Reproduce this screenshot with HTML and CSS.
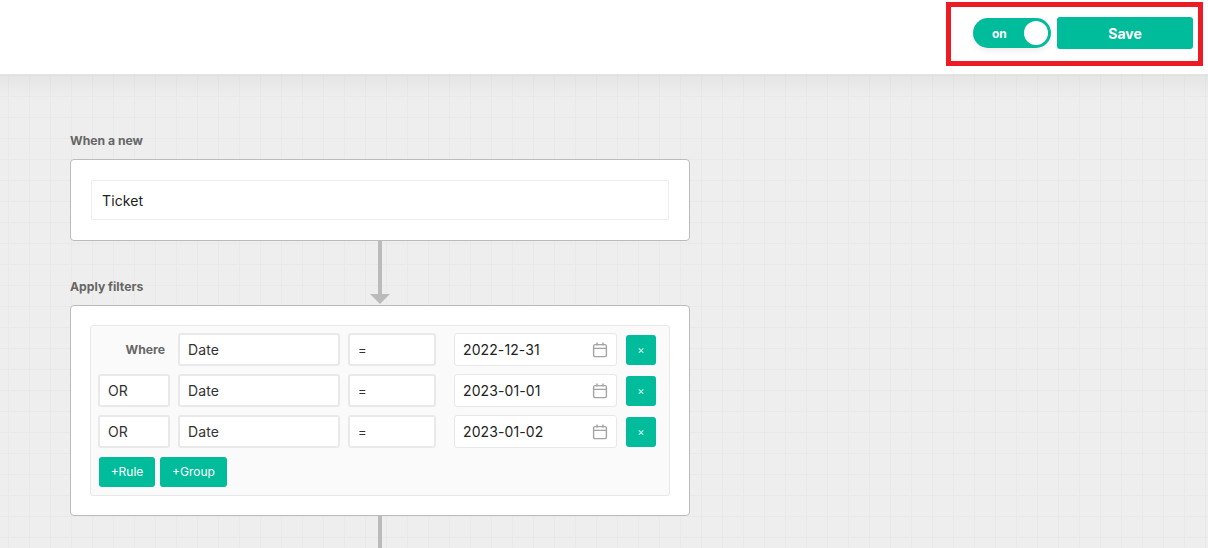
FILE: index.html
```html
<!DOCTYPE html>
<html lang="en">
<head>
<meta charset="utf-8">
<title>Workflow</title>
<link rel="stylesheet" href="styles.css">
</head>
<body>
<header class="topbar">
  <div class="actions">
    <div class="toggle"><span class="toggle-label">on</span><span class="knob"></span></div>
    <button class="save">Save</button>
  </div>
</header>
<main class="canvas">
  <div class="flow">
    <div class="label">When a new</div>
    <section class="card card-first">
      <div class="input-wide">Ticket</div>
    </section>
    <div class="connector connector-mid">
      <div class="line"></div>
      <div class="label label-filters">Apply filters</div>
      <div class="arrow"></div>
    </div>
    <section class="card card-filters">
      <div class="group">
        <div class="row">
          <div class="where">Where</div>
          <div class="field f-name">Date</div>
          <div class="field f-op">=</div>
          <div class="date"><span>2022-12-31</span>
            <svg class="cal" width="16" height="16" viewBox="0 0 16 16" fill="none" stroke="#a3a3a3" stroke-width="1.4"><rect x="1.6" y="2.6" width="12.8" height="12" rx="1.6"/><path d="M1.6 6.4h12.8M5 .6v3M11 .6v3"/></svg>
          </div>
          <button class="remove">×</button>
        </div>
        <div class="row">
          <div class="field f-logic">OR</div>
          <div class="field f-name">Date</div>
          <div class="field f-op">=</div>
          <div class="date"><span>2023-01-01</span>
            <svg class="cal" width="16" height="16" viewBox="0 0 16 16" fill="none" stroke="#a3a3a3" stroke-width="1.4"><rect x="1.6" y="2.6" width="12.8" height="12" rx="1.6"/><path d="M1.6 6.4h12.8M5 .6v3M11 .6v3"/></svg>
          </div>
          <button class="remove">×</button>
        </div>
        <div class="row">
          <div class="field f-logic">OR</div>
          <div class="field f-name">Date</div>
          <div class="field f-op">=</div>
          <div class="date"><span>2023-01-02</span>
            <svg class="cal" width="16" height="16" viewBox="0 0 16 16" fill="none" stroke="#a3a3a3" stroke-width="1.4"><rect x="1.6" y="2.6" width="12.8" height="12" rx="1.6"/><path d="M1.6 6.4h12.8M5 .6v3M11 .6v3"/></svg>
          </div>
          <button class="remove">×</button>
        </div>
        <div class="group-actions">
          <button class="add add-rule">+Rule</button>
          <button class="add add-group">+Group</button>
        </div>
      </div>
    </section>
    <div class="connector-end"></div>
  </div>
</main>
</body>
</html>
```
FILE: styles.css
```css
* { box-sizing: border-box; }
html, body { margin: 0; padding: 0; height: 100%; overflow: hidden; }
body { font-family: Inter, "Liberation Sans", sans-serif; color: #333; background: #eee; }
button { font-family: inherit; border: 0; cursor: pointer; padding: 0; }

.topbar { height: 74px; background: #fff; display: flex; justify-content: flex-end; align-items: flex-start; padding: 2px 5px 0 0; }
.actions { width: 257px; height: 64px; border: 5px solid #ed1c24; display: flex; align-items: center; padding: 0 5px 2px 22px; gap: 6px; }
.toggle { width: 78px; height: 30px; border-radius: 15px; background: #00bc9b; display: flex; align-items: center; justify-content: space-between; padding: 0 3px 0 19px; box-shadow: 0 3px 6px rgba(0,0,0,.08); }
.toggle-label { color: #fff; font-size: 12px; font-weight: 700; }
.knob { width: 24px; height: 24px; border-radius: 50%; background: #fff; }
.save { width: 136px; height: 32px; border-radius: 3px; background: #00bc9b; color: #fff; font-size: 14px; font-weight: 700; }

.canvas { height: 474px; padding: 59px 0 0 70px; overflow: hidden;
  background-color: #eee;
  background-image: linear-gradient(rgba(0,0,0,.04), transparent 24px), linear-gradient(#e9e9e9 1px, transparent 1px), linear-gradient(90deg, #e9e9e9 1px, transparent 1px);
  background-size: 100% 24px, 21px 21px, 21px 21px;
  background-position: 0 0, 8px 1px, 8px 1px;
  background-repeat: no-repeat, repeat, repeat; }
.flow { width: 620px; }
.label { font-size: 12.2px; font-weight: 700; color: #666; line-height: 15px; }
.card { background: #fff; border: 1px solid #bbb; border-radius: 4px; }
.card-first { height: 82px; margin-top: 11px; padding: 20px; }
.input-wide { height: 40px; border: 1px solid #eee; border-radius: 2px; padding-left: 10px; font-size: 14px; letter-spacing: .1px; line-height: 40px; color: #222; }

.connector { position: relative; }
.connector-mid { height: 64px; }
.line { position: absolute; left: 308px; top: 0; width: 4px; height: 54px; background: #bbb; }
.arrow { position: absolute; left: 300px; top: 53px; border-style: solid; border-width: 10px 10px 0 10px; border-color: #bbb transparent transparent; }
.label-filters { position: absolute; left: 0; top: 38px; }

.card-filters { height: 211px; padding: 19px; }
.group { height: 171px; background: #fafafa; border: 1px solid #e8e8e8; border-radius: 3px; padding: 7px 0 0 7px; }
.row { display: flex; align-items: center; height: 33px; margin-bottom: 8px; }
.where { width: 72px; margin-right: 8px; text-align: right; padding-right: 5px; font-size: 12.2px; font-weight: 700; color: #666; }
.field { height: 33px; background: #fff; border: 2px solid #e9e9e9; border-radius: 3px; font-size: 14px; letter-spacing: .1px; line-height: 29px; color: #333; padding-left: 8px; }
.f-logic { width: 72px; margin-right: 8px; }
.f-name { width: 162px; margin-right: 8px; }
.f-op { width: 88px; margin-right: 18px; font-size: 13px; line-height: 31px; }
.date { width: 163px; height: 33px; background: #fff; border: 1px solid #e8e8e8; border-radius: 3px; display: flex; align-items: center; justify-content: space-between; padding: 0 8px; font-size: 14px; letter-spacing: .1px; color: #222; margin-right: 9px; }
.remove { width: 30px; height: 30px; background: #00bc9b; color: #dcf7f1; border-radius: 3px; font-size: 11px; }
.group-actions { display: flex; gap: 5px; padding: 1px 0 0 1px; }
.add { height: 30px; background: #00bc9b; color: #fff; border-radius: 3px; font-size: 12px; font-weight: 400; padding-bottom: 2px; }
.add-rule { width: 56px; }
.add-group { width: 67px; }
.connector-end { width: 4px; height: 40px; margin-left: 308px; background: #bbb; }
```
